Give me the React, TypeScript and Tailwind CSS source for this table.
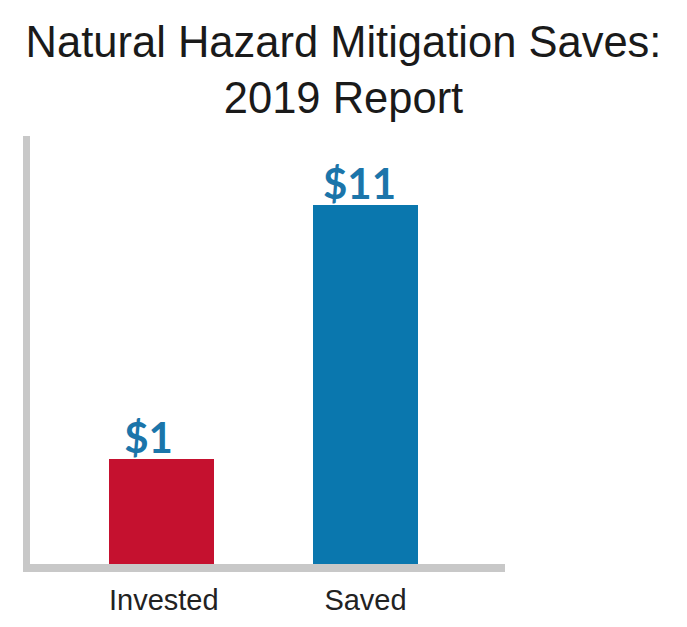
const bars = [
  { label: "Invested", value: "$1", height: 105, color: "bg-[#c5112f]", shift: "mr-[26px]" },
  { label: "Saved", value: "$11", height: 359, color: "bg-[#0a77ae]", shift: "mr-[12px]" },
];

export default function App() {
  return (
    <div className="h-[627px] w-[687px] overflow-hidden bg-white">
      <h1 className="pt-[14px] text-center font-['Liberation_Sans',Arial,sans-serif] text-[43.5px] font-normal leading-[56px] text-[#1a1a1a]">
        Natural Hazard Mitigation Saves:
        <br />
        2019 Report
      </h1>

      <div className="ml-[23px] mt-[10px] flex h-[436px] w-[482px] items-end gap-[99px] border-b-[8px] border-l-[7px] border-[#c8c8c8] pl-[79px]">
        {bars.map((bar) => (
          <div key={bar.label} className="flex w-[105px] flex-col items-center">
            <span
              className={`mb-[1px] font-['Lato',sans-serif] text-[42px] font-bold leading-[42px] text-[#1b75aa] ${bar.shift}`}
            >
              {bar.value}
            </span>
            <div className={`w-full ${bar.color}`} style={{ height: bar.height }} />
          </div>
        ))}
      </div>

      <div className="ml-[30px] mt-[10px] flex gap-[99px] pl-[79px]">
        {bars.map((bar) => (
          <span
            key={bar.label}
            className="w-[105px] whitespace-nowrap text-center font-['Liberation_Sans',Arial,sans-serif] text-[29px] leading-[36px] text-[#222]"
          >
            {bar.label}
          </span>
        ))}
      </div>
    </div>
  );
}
